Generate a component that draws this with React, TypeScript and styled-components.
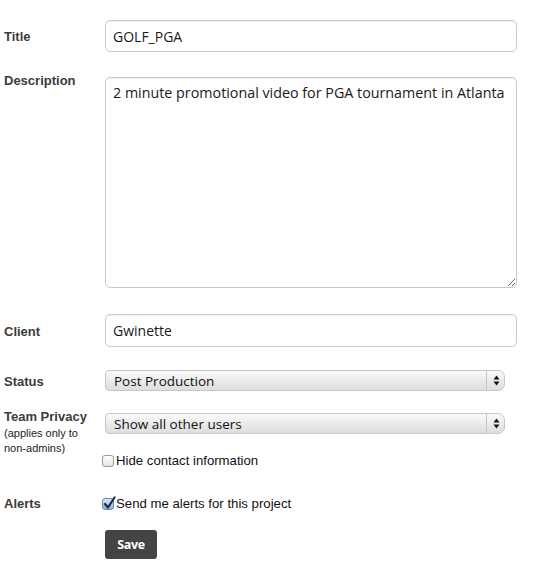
import React from "react";
import styled, { createGlobalStyle } from "styled-components";

const Global = createGlobalStyle`
  html, body { margin: 0; padding: 0; background: #fff; }
  body { font-family: "Liberation Sans", Arial, sans-serif; }
  * { box-sizing: border-box; }
`;

const Form = styled.form`
  display: flex;
  flex-direction: column;
  width: 517px;
  padding: 20px 0 0 4px;
`;

const Row = styled.div<{ $mt?: number }>`
  display: grid;
  grid-template-columns: 101px 1fr;
  align-items: start;
  margin-top: ${(p) => p.$mt ?? 0}px;
`;

const Label = styled.label<{ $pt?: number }>`
  display: block;
  padding-top: ${(p) => p.$pt ?? 0}px;
  font-family: "Liberation Sans", Arial, sans-serif;
  font-weight: bold;
  font-size: 13px;
  line-height: 15px;
  color: #3b3b3b;
`;

const SubNote = styled.span`
  display: block;
  margin-top: 2px;
  font-weight: normal;
  font-size: 11px;
  line-height: 14.5px;
  color: #222;
`;

const Field = styled.div<{ $mt?: number }>`
  display: flex;
  flex-direction: column;
  margin-top: ${(p) => p.$mt ?? 0}px;
`;

const TextInput = styled.input<{ $h?: number }>`
  width: 412px;
  height: ${(p) => p.$h ?? 32}px;
  padding: 0 7px;
  border: 1px solid #c9c9c9;
  border-radius: 5px;
  background: #fff;
  box-shadow: inset 0 1px 1px rgba(0, 0, 0, 0.06);
  font-family: "Open Sans", sans-serif;
  font-size: 14px;
  color: #1a1a1a;
  outline: none;
`;

const TextArea = styled.textarea`
  width: 412px;
  height: 211px;
  padding: 4px 3px 4px 7px;
  border: 1px solid #c9c9c9;
  border-radius: 5px;
  background: #fff;
  box-shadow: inset 0 1px 1px rgba(0, 0, 0, 0.06);
  font-family: "Open Sans", sans-serif;
  font-size: 14.3px;
  line-height: 21px;
  color: #1a1a1a;
  outline: none;
  resize: both;
`;

const SelectWrap = styled.div`
  position: relative;
  width: 400px;
  height: 21px;
`;

const Select = styled.select`
  appearance: none;
  -webkit-appearance: none;
  width: 100%;
  height: 100%;
  padding: 0 24px 0 8px;
  border: 1px solid #c6c6c6;
  border-radius: 4px 7px 7px 4px;
  background: linear-gradient(#fbfbfb 0%, #ececec 45%, #dedede 100%);
  font-family: "Open Sans", sans-serif;
  font-size: 13.5px;
  color: #111;
  outline: none;
`;

const Arrows = styled.span`
  position: absolute;
  top: 1px;
  right: 0;
  bottom: 1px;
  width: 19px;
  border-left: 1px solid #c4c4c4;
  display: flex;
  align-items: center;
  justify-content: center;
  pointer-events: none;
`;

const CheckLine = styled.label<{ $mt?: number }>`
  display: flex;
  align-items: center;
  gap: 2px;
  margin-left: -3px;
  margin-top: ${(p) => p.$mt ?? 0}px;
  font-family: "Liberation Sans", Arial, sans-serif;
  font-size: 13.2px;
  line-height: 15px;
  color: #111;
`;

const Box = styled.span<{ $on?: boolean }>`
  position: relative;
  width: 12px;
  height: 12px;
  border: 1px solid ${(p) => (p.$on ? "#6d87a8" : "#9a9a9a")};
  border-radius: 3px;
  background: ${(p) =>
    p.$on
      ? "linear-gradient(#d6e6f8, #8fb3df)"
      : "linear-gradient(#ffffff, #e6e6e6)"};
  flex: none;
`;

const Tick = styled.svg`
  position: absolute;
  left: 0px;
  top: -3px;
`;

const SaveButton = styled.button`
  width: 52px;
  height: 29px;
  border: none;
  border-radius: 3px;
  background: #444;
  color: #fff;
  font-family: "Open Sans", sans-serif;
  font-weight: bold;
  font-size: 12.5px;
  letter-spacing: -0.3px;
  cursor: pointer;
`;

const ArrowIcon = () => (
  <svg width="7" height="11" viewBox="0 0 7 11">
    <path d="M3.5 0.5 L6.5 4.5 L0.5 4.5 Z" fill="#111" />
    <path d="M3.5 10.5 L6.5 6.5 L0.5 6.5 Z" fill="#111" />
  </svg>
);

const FakeSelect = ({ value }: { value: string }) => (
  <SelectWrap>
    <Select defaultValue={value}>
      <option>{value}</option>
    </Select>
    <Arrows>
      <ArrowIcon />
    </Arrows>
  </SelectWrap>
);

const Check = ({
  on,
  mt,
  children,
}: {
  on?: boolean;
  mt?: number;
  children: React.ReactNode;
}) => (
  <CheckLine $mt={mt}>
    <Box $on={on}>
      {on && (
        <Tick width="13" height="14" viewBox="0 0 13 14">
          <path
            d="M2 8 L5 11.5 L11.5 1.5"
            fill="none"
            stroke="#1d2c44"
            strokeWidth="2.2"
            strokeLinecap="round"
            strokeLinejoin="round"
          />
        </Tick>
      )}
    </Box>
    {children}
  </CheckLine>
);

export default function App() {
  return (
    <>
      <Global />
      <Form onSubmit={(e) => e.preventDefault()}>
        <Row>
          <Label $pt={9}>Title</Label>
          <TextInput defaultValue="GOLF_PGA" />
        </Row>
        <Row $mt={21}>
          <Label>Description</Label>
          <Field $mt={4}>
            <TextArea defaultValue="2 minute promotional video for PGA tournament in Atlanta" />
          </Field>
        </Row>
        <Row $mt={26}>
          <Label $pt={10}>Client</Label>
          <TextInput $h={33} defaultValue="Gwinette" />
        </Row>
        <Row $mt={23}>
          <Label $pt={4}>Status</Label>
          <FakeSelect value="Post Production" />
        </Row>
        <Row $mt={18}>
          <Label>
            Team Privacy
            <SubNote>
              (applies only to
              <br />
              non-admins)
            </SubNote>
          </Label>
          <Field $mt={4}>
            <FakeSelect value="Show all other users" />
            <Check mt={19}>Hide contact information</Check>
          </Field>
        </Row>
        <Row $mt={28}>
          <Label>Alerts</Label>
          <Field>
            <Check on>Send me alerts for this project</Check>
          </Field>
        </Row>
        <Row $mt={19}>
          <span />
          <Field>
            <SaveButton type="submit">Save</SaveButton>
          </Field>
        </Row>
      </Form>
    </>
  );
}
